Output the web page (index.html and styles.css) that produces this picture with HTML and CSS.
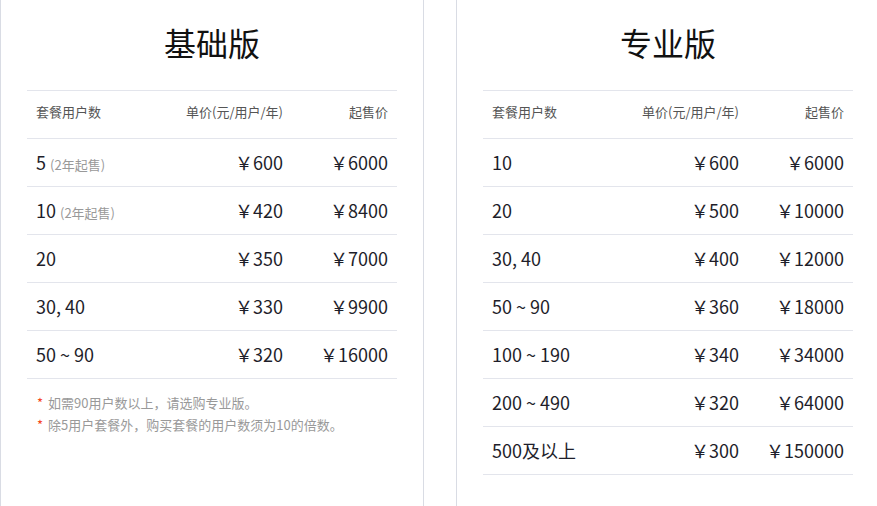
FILE: index.html
```html
<!DOCTYPE html>
<html lang="zh-CN">
<head>
<meta charset="utf-8">
<title>价格</title>
<link rel="stylesheet" href="styles.css">
</head>
<body>
<div class="wrap">
  <section class="panel">
    <h2 class="title">基础版</h2>
    <div class="table">
      <div class="row head"><span>套餐用户数</span><span class="r">单价(元/用户/年)</span><span class="r">起售价</span></div>
      <div class="row"><span>5 <em>(2年起售)</em></span><span class="r">￥600</span><span class="r">￥6000</span></div>
      <div class="row"><span>10 <em>(2年起售)</em></span><span class="r">￥420</span><span class="r">￥8400</span></div>
      <div class="row"><span>20</span><span class="r">￥350</span><span class="r">￥7000</span></div>
      <div class="row"><span>30, 40</span><span class="r">￥330</span><span class="r">￥9900</span></div>
      <div class="row"><span>50 ~ 90</span><span class="r">￥320</span><span class="r">￥16000</span></div>
    </div>
    <ul class="notes">
      <li><i>*</i>如需90用户数以上，请选购专业版。</li>
      <li><i>*</i>除5用户套餐外，购买套餐的用户数须为10的倍数。</li>
    </ul>
  </section>
  <section class="panel">
    <h2 class="title">专业版</h2>
    <div class="table">
      <div class="row head"><span>套餐用户数</span><span class="r">单价(元/用户/年)</span><span class="r">起售价</span></div>
      <div class="row"><span>10</span><span class="r">￥600</span><span class="r">￥6000</span></div>
      <div class="row"><span>20</span><span class="r">￥500</span><span class="r">￥10000</span></div>
      <div class="row"><span>30, 40</span><span class="r">￥400</span><span class="r">￥12000</span></div>
      <div class="row"><span>50 ~ 90</span><span class="r">￥360</span><span class="r">￥18000</span></div>
      <div class="row"><span>100 ~ 190</span><span class="r">￥340</span><span class="r">￥34000</span></div>
      <div class="row"><span>200 ~ 490</span><span class="r">￥320</span><span class="r">￥64000</span></div>
      <div class="row"><span>500及以上</span><span class="r">￥300</span><span class="r">￥150000</span></div>
    </div>
  </section>
</div>
</body>
</html>
```
FILE: styles.css
```css
* { box-sizing: border-box; }
html, body { margin: 0; padding: 0; background: #fff; }
body {
  font-family: "Noto Sans CJK SC", "Noto Sans", sans-serif;
  color: #222;
  overflow: hidden;
}
.wrap {
  display: flex;
  gap: 32px;
  width: 900px;
}
.panel {
  width: 424px;
  height: 540px;
  border: 1px solid #d9dce4;
  border-top: none;
  padding: 0 26px;
  flex: none;
}
.title {
  margin: 18px 0 24px;
  height: 48px;
  line-height: 48px;
  font-size: 32px;
  font-weight: 400;
  text-align: center;
  color: #111;
}
.table {
  border-top: 1px solid #e3e5ec;
}
.row {
  display: grid;
  grid-template-columns: 1fr 1fr 105px;
  height: 48px;
  align-items: center;
  border-bottom: 1px solid #e3e5ec;
  padding: 0 9px 2px;
  font-size: 18px;
  color: #1e1e2a;
}
.row.head {
  font-size: 13px;
  color: #555;
  padding-bottom: 6px;
}
.row .r { text-align: right; }
.row em {
  font-style: normal;
  font-size: 13px;
  color: #999;
}
.notes {
  list-style: none;
  margin: 0;
  padding: 13px 0 0 10px;
  font-size: 13px;
  line-height: 22px;
  color: #999;
}
.notes i {
  font-style: normal;
  color: #f5451c;
  margin-right: 5px;
}
```
